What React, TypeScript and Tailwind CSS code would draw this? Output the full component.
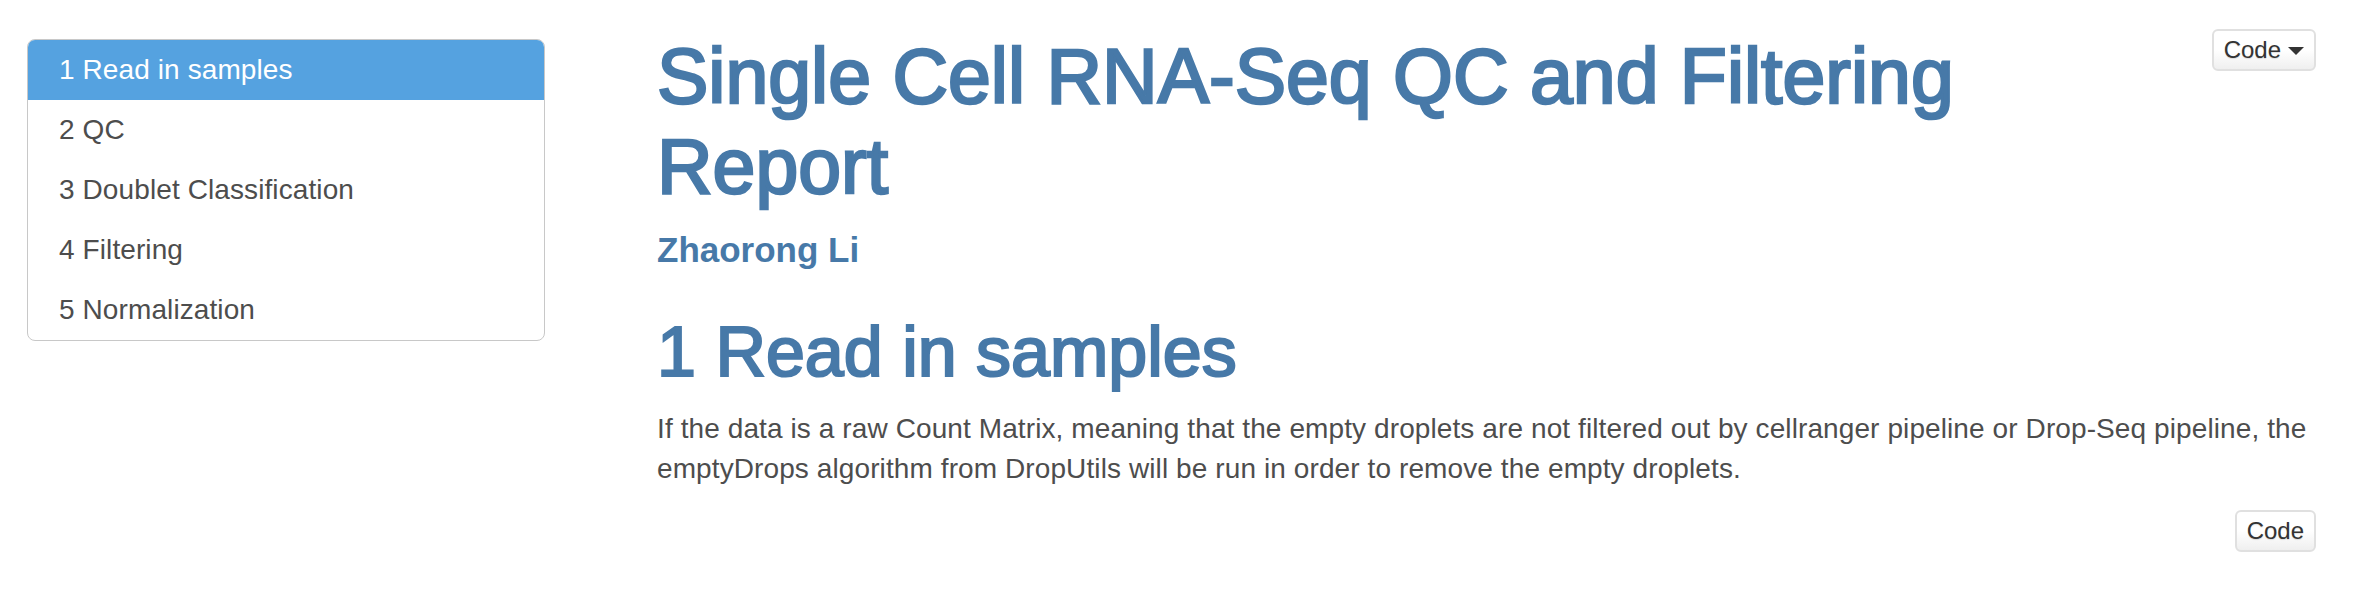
import React from "react";

const tocItems = [
  "1 Read in samples",
  "2 QC",
  "3 Doublet Classification",
  "4 Filtering",
  "5 Normalization",
];

function CodeButton({ caret }: { caret?: boolean }) {
  return (
    <button
      type="button"
      className="flex h-[42px] items-center rounded-[6px] border-2 border-[#e0e0e0] bg-gradient-to-b from-white from-50% to-[#efefef] px-[10px] text-[24px] leading-none text-[#333] [text-shadow:0_1px_1px_rgba(0,0,0,0.12)]"
    >
      <span>Code</span>
      {caret && (
        <span className="ml-[7px] mt-[2px] h-0 w-0 border-x-[8px] border-t-[8px] border-x-transparent border-t-[#333]" />
      )}
    </button>
  );
}

export default function App() {
  return (
    <div className="min-h-[596px] w-full bg-white font-['Liberation_Sans',Arial,sans-serif] text-[#333]">
      <div className="flex items-start pl-[27px] pr-[42px] pt-[29px] pb-[40px]">
        <nav className="mt-[10px] w-[518px] shrink-0 overflow-hidden rounded-[8px] border border-[#c8c8c8]">
          {tocItems.map((item, i) => (
            <div
              key={item}
              className={
                i === 0
                  ? "bg-[#55a2e0] py-[10px] pl-[31px] text-[28px] leading-[40px] tracking-[0.1px] text-white"
                  : "py-[10px] pl-[31px] text-[28px] leading-[40px] tracking-[0.1px] text-[#4d4d4d]"
              }
            >
              {item}
            </div>
          ))}
        </nav>

        <main className="ml-[112px] flex-1">
          <div className="flex items-start justify-between">
            <h1 className="mt-[2px] max-w-[1400px] text-[77px] font-normal leading-[90px] text-[#4779a8] [-webkit-text-stroke:2.5px_#4779a8]">
              Single Cell RNA-Seq QC and Filtering Report
            </h1>
            <CodeButton caret />
          </div>
          <h4 className="mt-[20px] text-[35px] font-bold leading-[38px] text-[#4779a8]">
            Zhaorong Li
          </h4>
          <h2 className="mt-[45px] text-[70px] font-normal leading-[77px] text-[#4779a8] [-webkit-text-stroke:2.2px_#4779a8]">
            1 Read in samples
          </h2>
          <p className="mt-[18px] text-[28px] leading-[40px] tracking-[0.1px] text-[#4d4d4d]">
            If the data is a raw Count Matrix, meaning that the empty droplets
            are not filtered out by cellranger pipeline or Drop-Seq pipeline,
            the emptyDrops algorithm from DropUtils will be run in order to
            remove the empty droplets.
          </p>
          <div className="mt-[21px] flex justify-end">
            <CodeButton />
          </div>
        </main>
      </div>
    </div>
  );
}
